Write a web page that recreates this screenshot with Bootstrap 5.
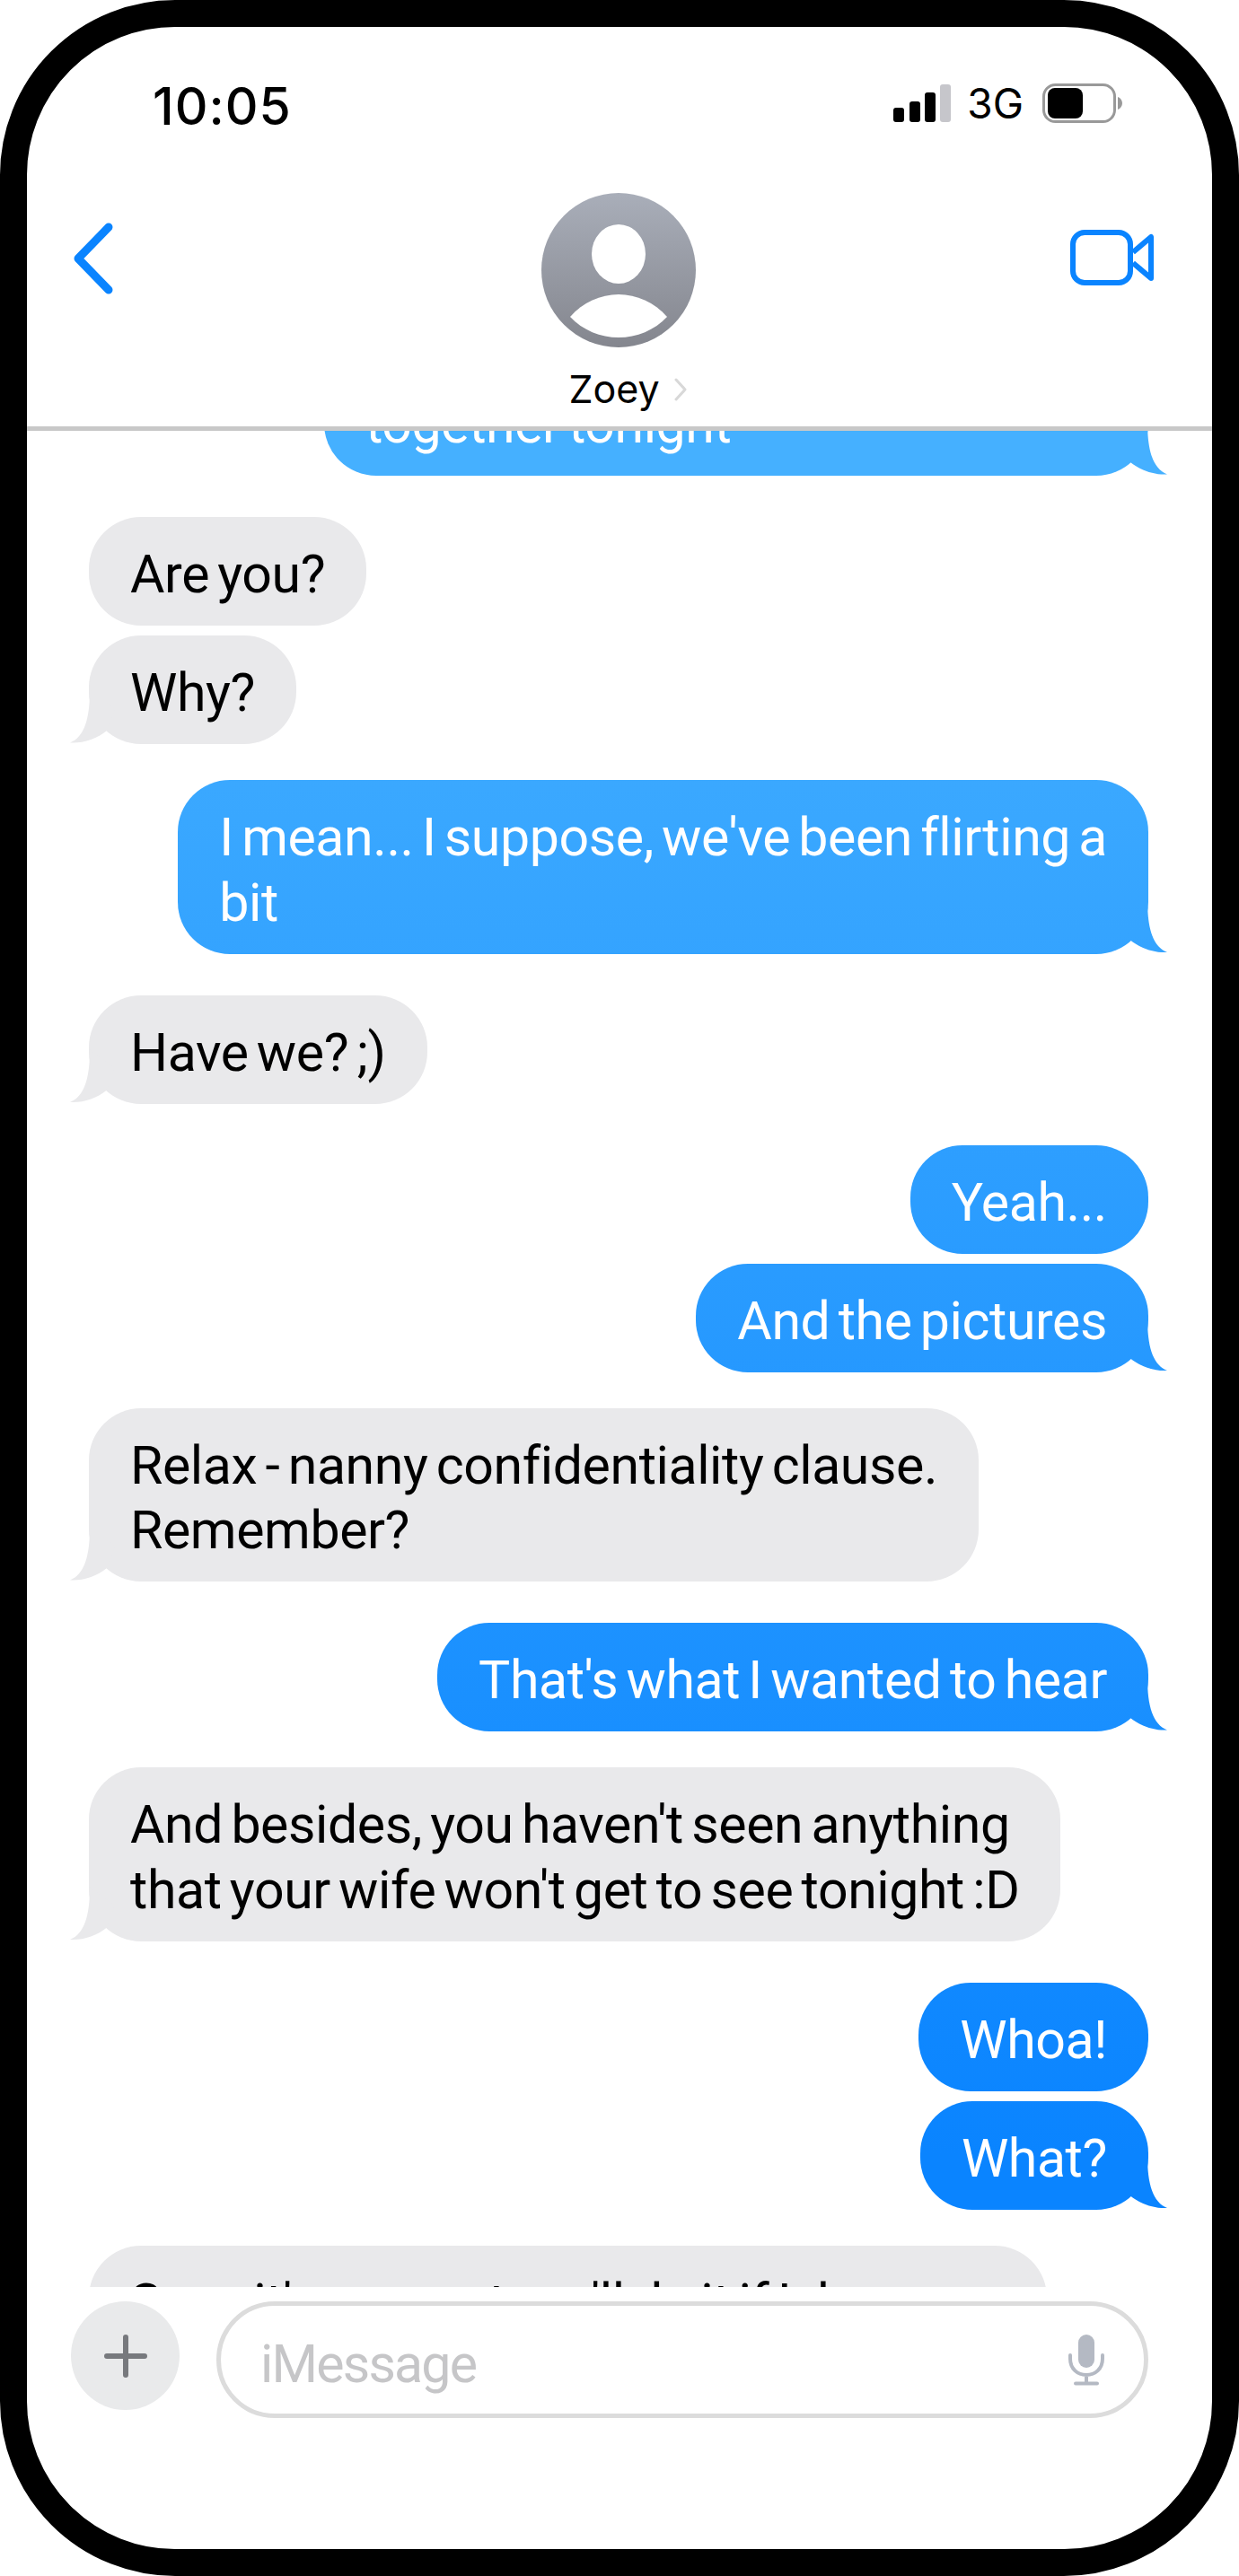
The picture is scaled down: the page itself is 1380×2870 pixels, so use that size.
<!DOCTYPE html>
<html lang="en">
<head>
    <meta charset="UTF-8">
    <meta name="viewport" content="width=device-width, initial-scale=1.0">
    <title>Messages</title>
    <link href="https://cdn.jsdelivr.net/npm/bootstrap@5.3.0/dist/css/bootstrap.min.css" rel="stylesheet">
    <style>
    body {
        margin: 0;
        background: #fff;
        font-family: "Roboto", "Liberation Sans", sans-serif;
    }
    .phone-frame {
        width: 1380px;
        height: 2870px;
        border: 30px solid #000;
        border-radius: 195px;
        background: #fff;
        overflow: hidden;
    }
    .status-row {
        height: 176px;
        padding: 0 100px 0 140px;
    }
    .status-time {
        font-family: "Inter", "Liberation Sans", sans-serif;
        font-size: 57px;
        font-weight: 500;
        letter-spacing: 1px;
        color: #000;
        margin-top: 2px;
    }
    .status-right { margin-bottom: 6px; }
    .status-net {
        font-family: "Inter", "Liberation Sans", sans-serif;
        font-size: 46px;
        color: #000;
        margin: 0 21px 0 18px;
        line-height: 1;
    }
    .nav-row {
        display: grid;
        grid-template-columns: 1fr auto 1fr;
        height: 274px;
        padding: 0 64px 0 51px;
        border-bottom: 5px solid #c8c8c8;
    }
    .nav-back { margin-top: 42px; }
    .nav-video { margin-top: 50px; justify-self: end; }
    .nav-person { margin: 9px 0 0 11px; }
    .nav-name {
        font-family: "Inter", "Liberation Sans", sans-serif;
        font-size: 43px;
        line-height: 1;
        color: #000;
        margin-top: 25px;
        padding-left: 20px;
        gap: 16px;
    }
    .chat-area {
        height: 2068px;
        padding: 0 71px 0 69px;
        overflow: hidden;
    }
    .msg {
        position: relative;
        flex-shrink: 0;
        padding: 28px 46px 20.5px;
        border-radius: 58px;
        font-size: 59px;
        line-height: 72.5px;
        letter-spacing: -0.4px;
        word-spacing: -5px;
        white-space: nowrap;
    }
    .msg-in {
        align-self: flex-start;
        background: #e9e9eb;
        color: #000;
    }
    .msg-out {
        align-self: flex-end;
        color: #fff;
        background: linear-gradient(180deg, #45b0ff 530px, #0a84ff 2400px) fixed;
    }
    .msg-tail::after {
        content: "";
        position: absolute;
        bottom: 0;
        width: 60px;
        height: 70px;
        background: inherit;
        clip-path: path("M38 10C38 42 44 62 60 68.5C46 69.500 30 64 19 55L10 30Z");
    }
    .msg-out.msg-tail::after { right: -21px; }
    .msg-in.msg-tail::after { left: -21px; transform: scaleX(-1); }
    .msg-top { width: 918px; margin-top: -71px; }
    .msg-cut { width: 1067px; }
    .same-group { margin-top: 11px; }
    .gap-to-in { margin-top: 46px; }
    .gap-to-out { margin-top: 40px; }
    .input-bar {
        padding: 16px 71px 0 49px;
        gap: 41px;
    }
    .plus-btn {
        width: 121px;
        height: 121px;
        background: #e9eaeb;
        flex-shrink: 0;
    }
    .input-pill {
        width: 1038px;
        height: 130px;
        border: 5px solid #dcdcdc;
        border-radius: 65px;
        padding: 0 44px;
    }
    .input-hint {
        font-size: 59px;
        letter-spacing: -1.8px;
        color: #c6c6c8;
        padding-top: 10px;
    }
</style>
</head>
<body>
    <div class="phone-frame d-flex flex-column">
        <div class="status-row d-flex justify-content-between align-items-center">
            <span class="status-time">10:05</span>
            <div class="status-right d-flex align-items-center">
                <svg width="64" height="42" viewBox="0 0 64 42">
                    <rect x="0" y="26" width="12" height="16" rx="3" fill="#000"/>
                    <rect x="18" y="19" width="12" height="23" rx="3" fill="#000"/>
                    <rect x="35" y="9" width="12" height="33" rx="3" fill="#000"/>
                    <rect x="52" y="0" width="12" height="42" rx="3" fill="#c6c6cb"/>
                </svg>
                <span class="status-net">3G</span>
                <svg width="89" height="44" viewBox="0 0 89 44">
                    <rect x="1.500" y="1.500" width="79" height="41" rx="13" fill="#fff" stroke="#999" stroke-width="3"/>
                    <rect x="6" y="5" width="39" height="34" rx="8" fill="#000"/>
                    <path d="M84 15C87 16 89 19 89 22C89 25 87 28 84 29Z" fill="#999"/>
                </svg>
            </div>
        </div>

        <div class="nav-row">
            <div class="nav-back">
                <svg width="46" height="80" viewBox="0 0 46 80">
                    <path d="M40 5L6 40L40 75" fill="none" stroke="#0a84ff" stroke-width="9" stroke-linecap="round" stroke-linejoin="round"/>
                </svg>
            </div>
            <div class="nav-person d-flex flex-column align-items-center">
                <svg width="172" height="172" viewBox="0 0 172 172">
                    <defs>
                        <linearGradient id="avatarFill" x1="0" y1="0" x2="0" y2="1">
                            <stop offset="0" stop-color="#a9aeb9"/>
                            <stop offset="1" stop-color="#84868e"/>
                        </linearGradient>
                    </defs>
                    <circle cx="86" cy="86" r="86" fill="url(#avatarFill)"/>
                    <ellipse cx="86" cy="68" rx="30" ry="33" fill="#fff"/>
                    <path d="M32 138C46 122 66 113 86 113C106 113 126 122 140 138C126 153 106 161 86 161C66 161 46 153 32 138Z" fill="#fff"/>
                </svg>
                <div class="nav-name d-flex align-items-center">
                    <span>Zoey</span>
                    <svg width="14" height="26" viewBox="0 0 14 26">
                        <path d="M2 2L12 13L2 24" fill="none" stroke="#d8d8d8" stroke-width="3" stroke-linecap="round" stroke-linejoin="round"/>
                    </svg>
                </div>
            </div>
            <div class="nav-video">
                <svg width="94" height="62" viewBox="0 0 94 62">
                    <rect x="3" y="3" width="64" height="56" rx="13" fill="none" stroke="#0a84ff" stroke-width="6"/>
                    <path d="M70 25L90 8V54L70 37" fill="none" stroke="#0a84ff" stroke-width="6" stroke-linejoin="round"/>
                </svg>
            </div>
        </div>

        <div class="chat-area d-flex flex-column">
            <div class="msg msg-out msg-tail msg-top">together tonight</div>
            <div class="msg msg-in gap-to-in">Are you?</div>
            <div class="msg msg-in msg-tail same-group">Why?</div>
            <div class="msg msg-out msg-tail gap-to-out">I mean... I suppose, we've been flirting a<br>bit</div>
            <div class="msg msg-in msg-tail gap-to-in">Have we? ;)</div>
            <div class="msg msg-out gap-to-in">Yeah...</div>
            <div class="msg msg-out msg-tail same-group">And the pictures</div>
            <div class="msg msg-in msg-tail gap-to-out">Relax - nanny confidentiality clause.<br>Remember?</div>
            <div class="msg msg-out msg-tail gap-to-in">That's what I wanted to hear</div>
            <div class="msg msg-in msg-tail gap-to-out">And besides, you haven't seen anything<br>that your wife won't get to see tonight :D</div>
            <div class="msg msg-out gap-to-in">Whoa!</div>
            <div class="msg msg-out msg-tail same-group">What?</div>
            <div class="msg msg-in msg-cut gap-to-out">Sure, it's a secret, we'll do it if I do</div>
        </div>

        <div class="input-bar d-flex align-items-start">
            <div class="plus-btn rounded-circle d-flex align-items-center justify-content-center">
                <svg width="48" height="48" viewBox="0 0 48 48">
                    <path d="M24 3V45M3 24H45" fill="none" stroke="#77797d" stroke-width="6" stroke-linecap="round"/>
                </svg>
            </div>
            <div class="input-pill d-flex align-items-center justify-content-between">
                <span class="input-hint">iMessage</span>
                <svg width="40" height="57" viewBox="0 0 40 57">
                    <rect x="11" y="0" width="18" height="37" rx="9" fill="#b4b9c3"/>
                    <path d="M2 23V27C2 38 10 45 20 45C30 45 38 38 38 27V23M20 45V54M8 54.500H32" fill="none" stroke="#b4b9c3" stroke-width="4" stroke-linecap="round"/>
                </svg>
            </div>
        </div>
    </div>
    <script src="https://cdn.jsdelivr.net/npm/bootstrap@5.3.0/dist/js/bootstrap.bundle.min.js"></script>
</body>
</html>
